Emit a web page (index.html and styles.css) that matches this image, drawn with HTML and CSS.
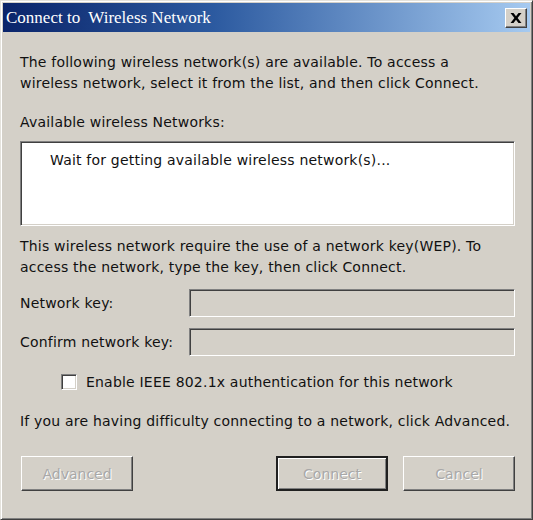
FILE: index.html
```html
<!DOCTYPE html>
<html lang="en">
<head>
<meta charset="UTF-8" />
<title>Connect to Wireless Network</title>
<link rel="stylesheet" href="styles.css">
</head>
<body>
  <!-- Dialog window -->
  <div class="window">
    <div class="titlebar">
      <span class="title">Connect to&nbsp; Wireless Network</span>
      <button class="close" aria-label="Close">
        <svg width="12" height="10" viewBox="0 0 12 10"><path d="M0.5 0h3l2.5 3.3L8.5 0h3L7.6 5l3.9 5h-3L6 6.7 3.5 10h-3l3.9-5z" fill="#000"/></svg>
      </button>
    </div>

    <div class="content">
      <p class="intro">The following wireless network(s) are available. To access a<br>wireless network, select it from the list, and then click Connect.</p>

      <p class="list-label">Available wireless Networks:</p>
      <div class="listbox">
        <div class="list-item">Wait for getting available wireless network(s)...</div>
      </div>

      <p class="key-info">This wireless network require the use of a network key(WEP). To<br>access the network, type the key, then click Connect.</p>

      <div class="field">
        <label for="key">Network key:</label>
        <input id="key" type="password" disabled>
      </div>
      <div class="field">
        <label for="key2">Confirm network key:</label>
        <input id="key2" type="password" disabled>
      </div>

      <div class="check-row">
        <span class="checkbox"></span>
        <span>Enable IEEE 802.1x authentication for this network</span>
      </div>

      <p class="help">If you are having difficulty connecting to a network, click Advanced.</p>

      <div class="buttons">
        <button class="btn" disabled>Advanced</button>
        <div class="right">
          <button class="btn default" disabled>Connect</button>
          <button class="btn" disabled>Cancel</button>
        </div>
      </div>
    </div>
  </div>
</body>
</html>
```

FILE: styles.css
```css
/* Classic dialog look */
* {
  box-sizing: border-box;
}
html, body {
  margin: 0;
  padding: 0;
  background: #d4d0c8;
}

.window {
  width: 533px;
  height: 520px;
  background: #d4d0c8;
  border: 1px solid;
  border-color: #e4e2dc #404040 #404040 #e4e2dc;
  box-shadow: inset 1px 1px #fff, inset -1px -1px #808080;
  padding: 2px 2px 0 2px;
  font-family: "DejaVu Sans", Tahoma, sans-serif;
  font-size: 14px;
  letter-spacing: 0.2px;
  color: #111;
}

.titlebar {
  height: 29px;
  background: linear-gradient(90deg, #0a246a 0%, #2c5aa0 40%, #a6caf0 100%);
  display: flex;
  align-items: center;
  justify-content: space-between;
  padding: 0 3px 0 3px;
}

.title {
  font-family: "Liberation Serif", "Times New Roman", serif;
  font-size: 17px;
  letter-spacing: 0;
  color: #fff;
}

.close {
  width: 22px;
  height: 20px;
  padding: 0;
  background: #d4d0c8;
  border: 1px solid;
  border-color: #fff #404040 #404040 #fff;
  box-shadow: inset -1px -1px #808080;
  display: flex;
  align-items: center;
  justify-content: center;
}

.content {
  padding: 20px 15px 0 17px;
}

p {
  margin: 0;
  line-height: 21px;
}

.list-label {
  margin-top: 18px;
}

.listbox {
  margin-top: 8px;
  height: 85px;
  background: #fff;
  border: 1px solid;
  border-color: #808080 #fff #fff #808080;
  box-shadow: inset 1px 1px #404040, inset -1px -1px #d4d0c8;
  padding: 8px 0 0 29px;
}

.list-item {
  line-height: 21px;
}

.key-info {
  margin-top: 10px;
}

.field {
  display: flex;
  align-items: center;
  justify-content: space-between;
  margin-top: 11px;
}

.field input {
  width: 326px;
  height: 28px;
  margin: 0;
  background: #d4d0c8;
  border: 1px solid;
  border-color: #808080 #fff #fff #808080;
  box-shadow: inset 1px 1px #404040, inset -1px -1px #d4d0c8;
}

.check-row {
  display: flex;
  align-items: center;
  gap: 9px;
  margin: 15px 0 0 41px;
  height: 21px;
}

.checkbox {
  width: 16px;
  height: 16px;
  background: #fff;
  border: 1px solid;
  border-color: #808080 #fff #fff #808080;
  box-shadow: inset 1px 1px #404040, inset -1px -1px #d4d0c8;
}

.help {
  margin-top: 19px;
}

.buttons {
  display: flex;
  justify-content: space-between;
  margin-top: 24px;
  padding-left: 1px;
}

.right {
  display: flex;
  gap: 15px;
}

.btn {
  width: 112px;
  height: 35px;
  padding: 0;
  font-family: "DejaVu Sans", Tahoma, sans-serif;
  font-size: 14px;
  background: #d4d0c8;
  color: #a8a8a8;
  text-shadow: 1px 1px #fff;
  border: 1px solid;
  border-color: #fff #404040 #404040 #fff;
  box-shadow: inset -1px -1px #808080;
}

.btn.default {
  border: 2px solid #202020;
  box-shadow: inset 1px 1px #fff, inset -1px -1px #808080;
}
```
